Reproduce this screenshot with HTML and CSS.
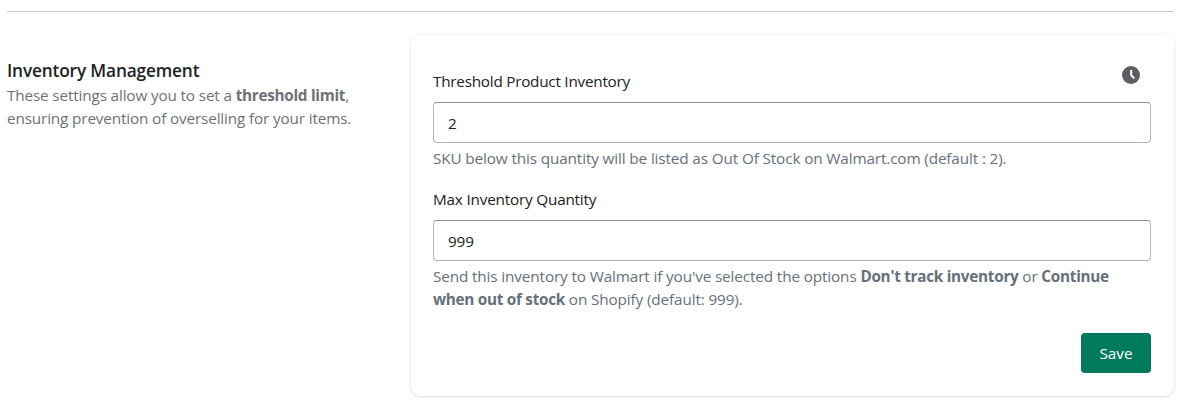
FILE: index.html
```html
<!DOCTYPE html>
<html lang="en">
<head>
<meta charset="utf-8">
<title>Inventory Management</title>
<link rel="stylesheet" href="styles.css">
</head>
<body>
<main class="page">
  <section class="annotated">
    <div class="intro">
      <h2 class="title">Inventory Management</h2>
      <p class="desc">These settings allow you to set a <b>threshold limit</b>,<br>ensuring prevention of overselling for your items.</p>
    </div>
    <form class="card">
      <div class="field">
        <div class="label-row">
          <label class="label" for="threshold">Threshold Product Inventory</label>
          <svg class="clock" viewBox="0 0 18 18"><circle cx="9" cy="9" r="9"/><path d="M9.2 4.7V9.2L11.8 11.9"/></svg>
        </div>
        <input class="input" id="threshold" type="text" value="2">
        <p class="help help-a">SKU below this quantity will be listed as Out Of Stock on Walmart.com (default : 2).</p>
      </div>
      <div class="field">
        <label class="label label-b" for="max">Max Inventory Quantity</label>
        <input class="input" id="max" type="text" value="999">
        <p class="help help-b">Send this inventory to Walmart if you've selected the options <b>Don't track inventory</b> or <b>Continue</b><br><b>when out of stock</b> on Shopify (default: 999).</p>
      </div>
      <div class="actions"><button class="save" type="button">Save</button></div>
    </form>
  </section>
</main>
</body>
</html>
```
FILE: styles.css
```css
* { box-sizing: border-box; }
body { margin: 0; background: #fff; font-family: "Open Sans", "Noto Sans", sans-serif; font-size: 15.3px; line-height: 23px; color: #202223; }
.page { height: 406px; padding: 11px 19px 0 7px; }
.annotated { display: grid; grid-template-columns: 404px 763px; border-top: 1px solid #c9cccf; padding-top: 23px; }
.intro { padding-top: 24px; }
.title { margin: 0 0 1px; font-size: 17.3px; line-height: 24px; font-weight: 600; letter-spacing: -.17px; }
.desc, .help { margin: 0; color: #6d7175; white-space: nowrap; }
.desc { letter-spacing: -.15px; }
b { font-weight: 700; letter-spacing: -.28px; }
.card { height: 361px; padding: 23px 23px 23px 22px; border-radius: 9px; background: #fff; box-shadow: 0 0 5px rgba(23,24,24,.07), 0 1px 2px rgba(0,0,0,.1); }
.field { display: flex; flex-direction: column; }
.label { letter-spacing: -.25px; }
.label-row { display: flex; justify-content: space-between; height: 44px; }
.label-row .label { padding-top: 12px; }
.label-b { padding: 18px 0 9px; letter-spacing: -.2px; }
.clock { width: 18px; height: 18px; margin: 8px 11px 0 0; fill: #5c5f62; }
.clock path { fill: none; stroke: #fff; stroke-width: 2; stroke-linecap: round; stroke-linejoin: round; }
.input { width: 718px; height: 41px; padding: 0 14px; border: 1px solid #aeb4bf; border-top-color: #898f94; border-radius: 4px; background: #fff; font: inherit; letter-spacing: -.15px; color: inherit; }
.help { padding-top: 4px; color: #66707b; }
.help-a { letter-spacing: -.13px; }
.help-b { letter-spacing: -.13px; }
.actions { display: flex; justify-content: flex-end; padding-top: 22px; }
.save { width: 70px; height: 40px; border: 0; border-radius: 4px; background: #007a5c; color: #fff; font: inherit; font-weight: 500; }
```
